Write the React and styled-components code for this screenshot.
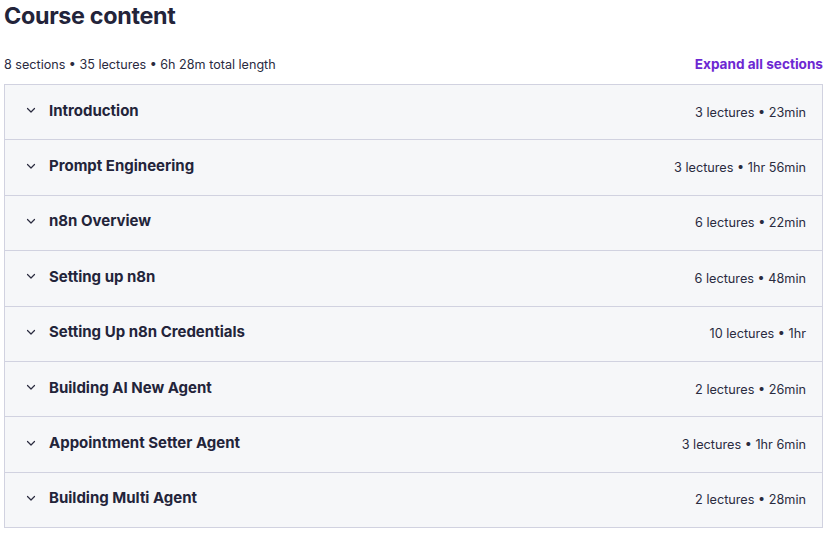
import React from 'react'
import styled, { createGlobalStyle } from 'styled-components'

const GlobalStyle = createGlobalStyle`
  body {
    margin: 0;
    background: #fff;
    font-family: Inter, "Noto Sans", sans-serif;
    color: #2a2b3f;
  }
`

const Wrapper = styled.div`
  padding: 0 6px 0 4px;
`

const Title = styled.h2`
  margin: 0;
  padding-top: 1px;
  font-size: 23.3px;
  line-height: 30px;
  font-weight: 700;
  letter-spacing: -0.3px;
  color: #23243a;
`

const Meta = styled.div`
  display: flex;
  align-items: center;
  justify-content: space-between;
  margin-top: 23px;
  height: 20px;
  margin-bottom: 10px;
`

const Summary = styled.span`
  font-size: 12.6px;
  color: #2a2b3f;
`

const ExpandLink = styled.button`
  border: none;
  background: none;
  padding: 0;
  font-family: inherit;
  font-size: 13.6px;
  font-weight: 700;
  color: #6d28d2;
  cursor: pointer;
`

const Panel = styled.div`
  border: 1px solid #d1d2e0;
  border-bottom: none;
`

const SectionRow = styled.div`
  display: flex;
  align-items: center;
  height: 55.4px;
  box-sizing: border-box;
  padding: 0 16px 0 20px;
  background: #f6f7f9;
  border-bottom: 1px solid #d1d2e0;
`

const Chevron = styled.svg`
  width: 12px;
  height: 12px;
  margin-right: 12px;
  margin-top: -4px;
  flex: none;
`

const SectionTitle = styled.span`
  flex: 1;
  font-size: 15px;
  font-weight: 700;
  color: #23243a;
  margin-top: -4px;
`

const SectionInfo = styled.span`
  font-size: 12.7px;
  color: #2a2b3f;
`

const sections = [
  ['Introduction', '3 lectures • 23min'],
  ['Prompt Engineering', '3 lectures • 1hr 56min'],
  ['n8n Overview', '6 lectures • 22min'],
  ['Setting up n8n', '6 lectures • 48min'],
  ['Setting Up n8n Credentials', '10 lectures • 1hr'],
  ['Building AI New Agent', '2 lectures • 26min'],
  ['Appointment Setter Agent', '3 lectures • 1hr 6min'],
  ['Building Multi Agent', '2 lectures • 28min']
]

export default function App () {
  return (
    <Wrapper>
      <GlobalStyle />
      <Title>Course content</Title>
      <Meta>
        <Summary>8 sections • 35 lectures • 6h 28m total length</Summary>
        <ExpandLink>Expand all sections</ExpandLink>
      </Meta>
      <Panel>
        {sections.map(([name, info]) => (
          <SectionRow key={name}>
            <Chevron viewBox='0 0 12 12' fill='none'>
              <path d='M2.5 4.5 L6 8 L9.5 4.5' stroke='#2a2b3f' strokeWidth='1.2' strokeLinecap='round' strokeLinejoin='round' />
            </Chevron>
            <SectionTitle>{name}</SectionTitle>
            <SectionInfo>{info}</SectionInfo>
          </SectionRow>
        ))}
      </Panel>
    </Wrapper>
  )
}
